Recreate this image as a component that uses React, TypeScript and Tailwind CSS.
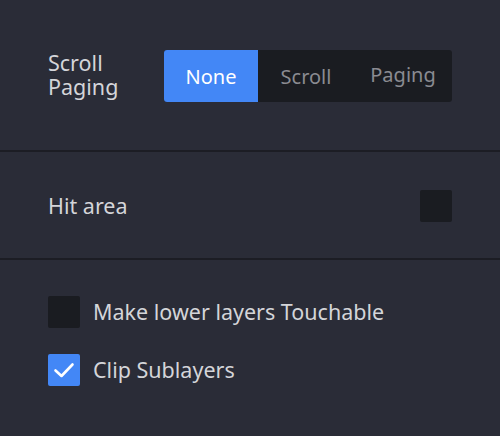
import React from "react";

function Check({ checked }: { checked?: boolean }) {
  return (
    <div
      className={`w-[32px] h-[32px] rounded-[2px] flex items-center justify-center shrink-0 ${
        checked ? "bg-[#4387f6]" : "bg-[#1a1c21]"
      }`}
    >
      {checked && (
        <svg width="24" height="24" viewBox="0 0 24 24" fill="none">
          <path d="M3.5 12.5 L9.5 18 L20.5 6.5" stroke="white" strokeWidth="2.6" strokeLinecap="round" strokeLinejoin="round" />
        </svg>
      )}
    </div>
  );
}

export default function App() {
  return (
    <div
      className="w-[500px] h-[436px] bg-[#2a2c37] text-[#d4d5d9] overflow-hidden"
      style={{ fontFamily: '"Noto Sans", "DejaVu Sans", sans-serif' }}
    >
      <div className="pt-[50px] pb-[48px] pl-[48px] pr-[48px] flex items-start">
        <div className="w-[116px] pt-[1px] text-[21.5px] leading-[24px]">
          Scroll
          <br />
          Paging
        </div>
        <div className="flex h-[52px] w-[288px] rounded-[3px] overflow-hidden bg-[#1a1c21] text-[20px]">
          <div className="w-[94px] bg-[#4387f6] text-white flex items-center justify-center pt-[1px]">None</div>
          <div className="w-[96px] text-[#8a8b91] flex items-center justify-center pt-[1px]">Scroll</div>
          <div className="flex-1 text-[#8a8b91] flex items-center justify-center pb-[2px]">Paging</div>
        </div>
      </div>
      <div className="h-[2px] bg-[#1c1d24]" />
      <div className="pt-[38px] pb-[36px] px-[48px] flex items-center justify-between">
        <div className="text-[21.5px] leading-[25px] pb-[1px]">Hit area</div>
        <Check />
      </div>
      <div className="h-[2px] bg-[#1c1d24]" />
      <div className="pt-[36px] px-[48px] flex flex-col gap-[26px]">
        <div className="flex items-center gap-[13px]">
          <Check />
          <span className="text-[21.5px] leading-[25px] pb-[1px]">Make lower layers Touchable</span>
        </div>
        <div className="flex items-center gap-[13px]">
          <Check checked />
          <span className="text-[21.5px] leading-[25px] pb-[1px]">Clip Sublayers</span>
        </div>
      </div>
    </div>
  );
}
